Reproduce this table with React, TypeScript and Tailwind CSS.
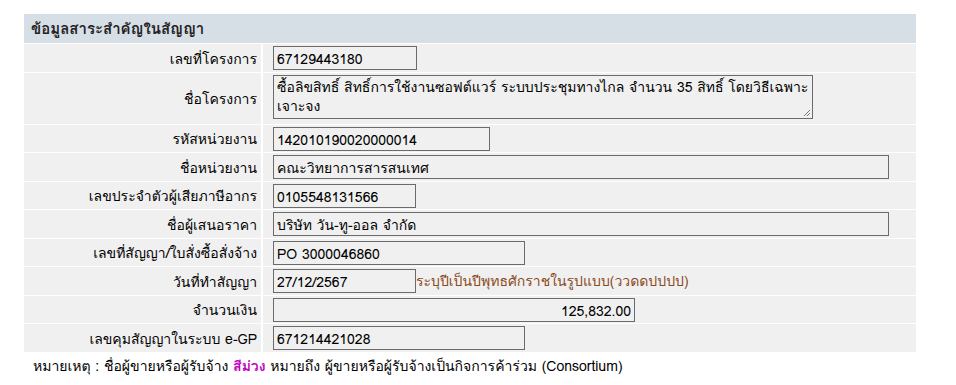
const font = { fontFamily: 'Tahoma, Loma, "Noto Sans Thai", "Noto Sans", sans-serif' };

type Row = {
    label: string;
    value: string;
    width: string;
    height: string;
    right?: boolean;
    hint?: string;
};

const rows: Row[] = [
    { label: 'รหัสหน่วยงาน', value: '142010190020000014', width: 'w-[217px]', height: 'h-[27px]' },
    { label: 'ชื่อหน่วยงาน', value: 'คณะวิทยาการสารสนเทศ', width: 'w-[616px]', height: 'h-[28px]' },
    { label: 'เลขประจำตัวผู้เสียภาษีอากร', value: '0105548131566', width: 'w-[143px]', height: 'h-[27px]' },
    { label: 'ชื่อผู้เสนอราคา', value: 'บริษัท วัน-ทู-ออล จำกัด', width: 'w-[616px]', height: 'h-[28px]' },
    { label: 'เลขที่สัญญา/ใบสั่งซื้อสั่งจ้าง', value: 'PO 3000046860', width: 'w-[252px]', height: 'h-[27px]' },
    { label: 'วันที่ทำสัญญา', value: '27/12/2567', width: 'w-[143px]', height: 'h-[28px]', hint: 'ระบุปีเป็นปีพุทธศักราชในรูปแบบ(ววดดปปปป)' },
    { label: 'จำนวนเงิน', value: '125,832.00', width: 'w-[362px]', height: 'h-[27px]', right: true },
    { label: 'เลขคุมสัญญาในระบบ e-GP', value: '671214421028', width: 'w-[252px]', height: 'h-[28px]' },
];

const Field = ({ value, width, right }: { value: string; width: string; right?: boolean }) => (
    <div
        className={`${width} h-[24px] border border-[#6b6b6b] bg-[#f0f0f0] px-[3px] pt-[1px] leading-[22px] whitespace-nowrap overflow-hidden ${right ? 'text-right' : ''}`}
    >
        {value}
    </div>
);

export default function App() {
    return (
        <div className="bg-white min-h-[385px] pt-[14px] pl-[24px] text-[14px] text-black" style={font}>
            <div className="w-[892px] flex flex-col gap-[1px]">
                <div className="h-[29px] bg-[#d6dee6] pl-[7px] pt-[1px] flex items-center font-bold text-[15px] text-[#222]">
                    ข้อมูลสาระสำคัญในสัญญา
                </div>

                <div className="grid grid-cols-[237px_1fr] gap-x-[2px] h-[28px]">
                    <div className="bg-[#f0f0f0] flex items-center justify-end pr-[4px] pt-[2px]">เลขที่โครงการ</div>
                    <div className="bg-[#f0f0f0] flex items-center pl-[10px]">
                        <Field value="67129443180" width="w-[144px]" />
                    </div>
                </div>

                <div className="grid grid-cols-[237px_1fr] gap-x-[2px] h-[51px]">
                    <div className="bg-[#f0f0f0] flex items-center justify-end pr-[4px] pt-[1px]">ชื่อโครงการ</div>
                    <div className="bg-[#f0f0f0] pl-[10px] pt-[2px]">
                        <div className="relative w-[540px] h-[44px] border border-[#6b6b6b] bg-[#f0f0f0] px-[3px] pt-[2px] leading-[19px]">
                            ซื้อลิขสิทธิ์ สิทธิ์การใช้งานซอฟต์แวร์ ระบบประชุมทางไกล จำนวน 35 สิทธิ์ โดยวิธีเฉพาะเจาะจง
                            <svg className="absolute right-[1px] bottom-[1px]" width="9" height="9" viewBox="0 0 9 9">
                                <path d="M8 2 L2 8 M8 5 L5 8" stroke="#777" strokeWidth="1" />
                            </svg>
                        </div>
                    </div>
                </div>

                {rows.map((row) => (
                    <div key={row.label} className={`grid grid-cols-[237px_1fr] gap-x-[2px] ${row.height}`}>
                        <div className="bg-[#f0f0f0] flex items-center justify-end pr-[4px] pt-[2px]">{row.label}</div>
                        <div className="bg-[#f0f0f0] flex items-center pl-[10px]">
                            <Field value={row.value} width={row.width} right={row.right} />
                            {row.hint ? <span className="text-[#8a4b1c] whitespace-nowrap pt-[1px]">{row.hint}</span> : null}
                        </div>
                    </div>
                ))}
            </div>

            <div className="mt-[4px] pl-[9px] leading-[20px]">
                หมายเหตุ : ชื่อผู้ขายหรือผู้รับจ้าง <span className="text-[#c000c0] font-bold">สีม่วง</span> หมายถึง ผู้ขายหรือผู้รับจ้างเป็นกิจการค้าร่วม (Consortium)
            </div>
        </div>
    );
}
